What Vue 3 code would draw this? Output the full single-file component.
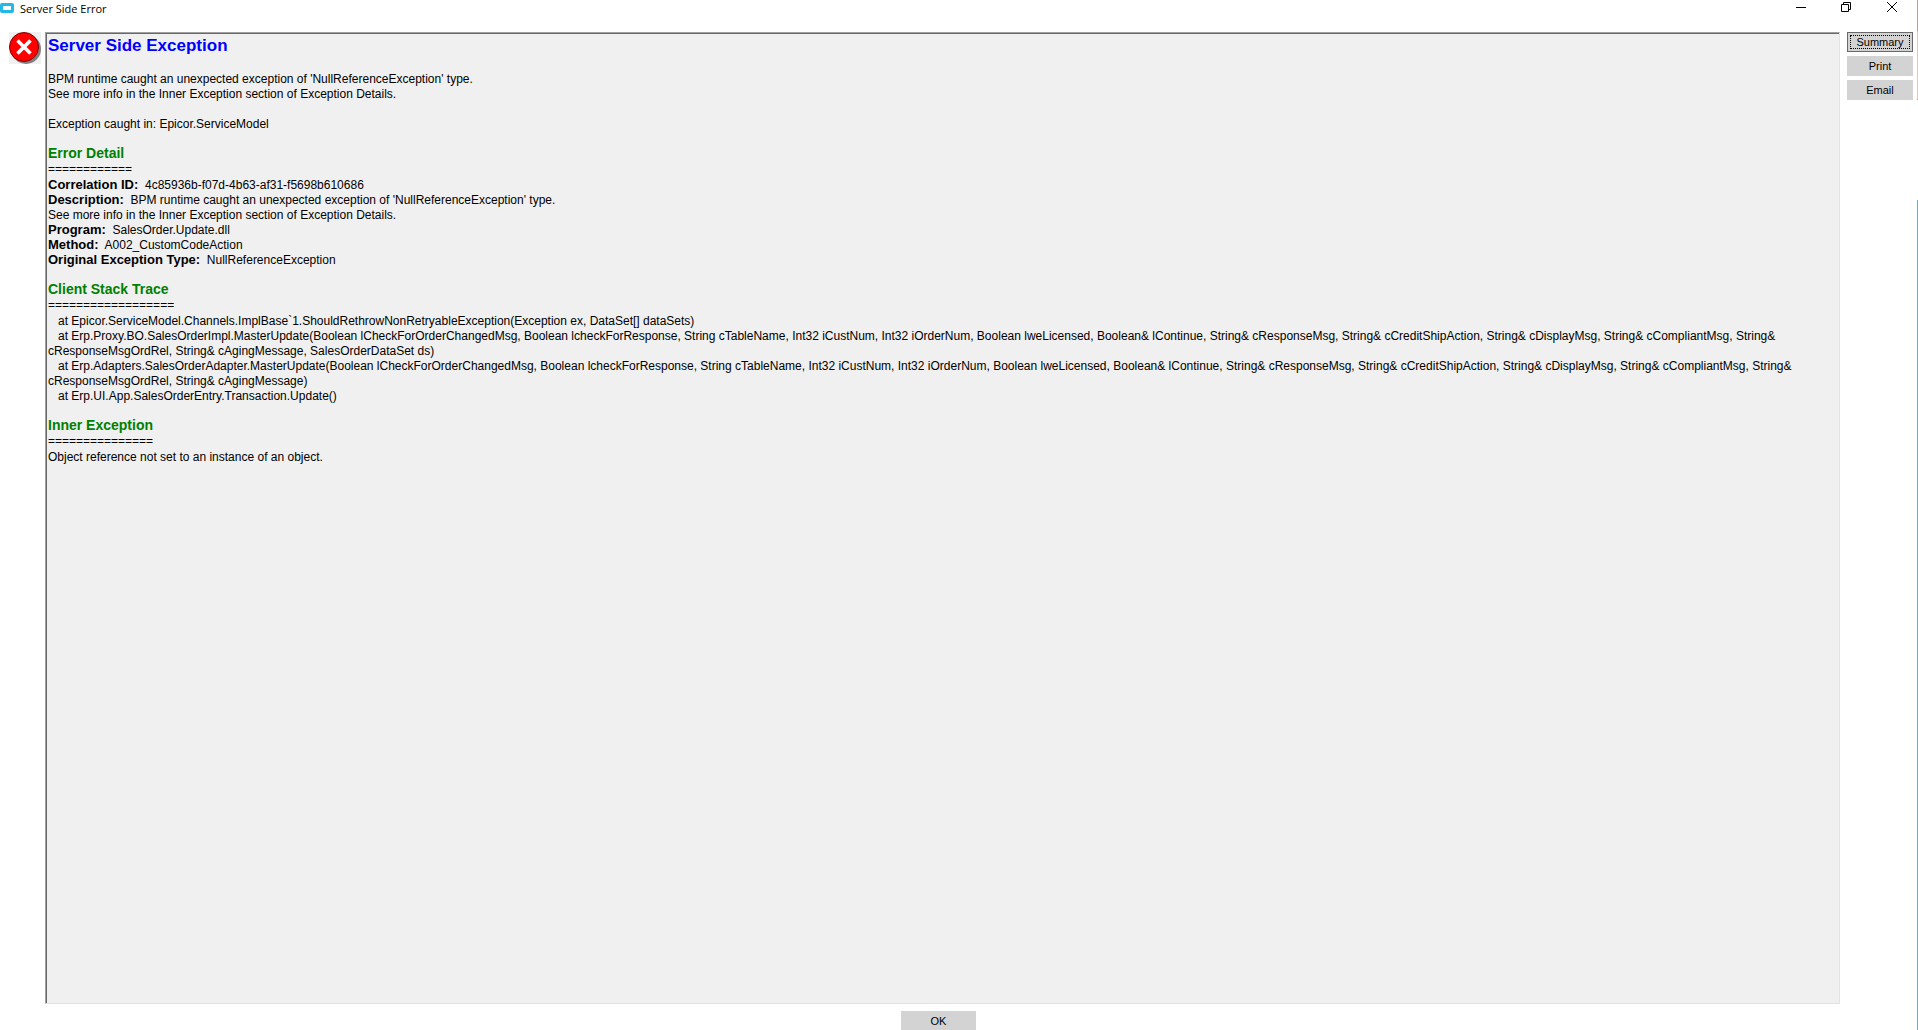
<script setup>
const rule = (n) => '='.repeat(n)

const message =
  "BPM runtime caught an unexpected exception of 'NullReferenceException' type.\nSee more info in the Inner Exception section of Exception Details."

const details = [
  { label: 'Correlation ID:', value: '4c85936b-f07d-4b63-af31-f5698b610686' },
  { label: 'Description:', value: message },
  { label: 'Program:', value: 'SalesOrder.Update.dll' },
  { label: 'Method:', value: 'A002_CustomCodeAction' },
  { label: 'Original Exception Type:', value: 'NullReferenceException' }
]

const args =
  'Boolean lCheckForOrderChangedMsg, Boolean lcheckForResponse, String cTableName, Int32 iCustNum, Int32 iOrderNum, Boolean lweLicensed, Boolean& lContinue, String& cResponseMsg, String& cCreditShipAction, String& cDisplayMsg, String& cCompliantMsg, String& cResponseMsgOrdRel, String& cAgingMessage'

const stack = [
  'Epicor.ServiceModel.Channels.ImplBase`1.ShouldRethrowNonRetryableException(Exception ex, DataSet[] dataSets)',
  `Erp.Proxy.BO.SalesOrderImpl.MasterUpdate(${args}, SalesOrderDataSet ds)`,
  `Erp.Adapters.SalesOrderAdapter.MasterUpdate(${args})`,
  'Erp.UI.App.SalesOrderEntry.Transaction.Update()'
]
</script>

<template>
  <div class="window">
    <header class="titlebar">
      <svg class="app-icon" width="14" height="10" viewBox="0 0 14 10" aria-hidden="true">
        <rect width="14" height="10" rx="2" fill="#22b8ea" />
        <rect x="3" y="3" width="8" height="4" fill="#fff" />
      </svg>
      <span class="caption">Server Side Error</span>
      <button class="control" aria-label="Minimize">
        <svg width="12" height="12" viewBox="0 0 12 12"><path d="M2 6.5h10" stroke="#000" fill="none" /></svg>
      </button>
      <button class="control" aria-label="Restore">
        <svg width="12" height="12" viewBox="0 0 12 12"><path d="M1.500 3.500h7v7h-7zM3.500 3.500v-2h7v7h-2" stroke="#000" fill="none" /></svg>
      </button>
      <button class="control" aria-label="Close">
        <svg width="12" height="12" viewBox="0 0 12 12"><path d="M1 1l10 10M11 1L1 11" stroke="#000" fill="none" /></svg>
      </button>
    </header>

    <main class="body">
      <svg class="error-icon" width="32" height="32" viewBox="0 0 32 32" role="img" aria-label="Error">
        <rect width="32" height="32" fill="#f0f0f0" />
        <circle cx="17" cy="17" r="15" fill="#808080" />
        <circle cx="15" cy="15" r="14.500" fill="#f00" stroke="#800000" />
        <path d="M8.500 8.500l13 13M21.500 8.500l-13 13" stroke="#fff" stroke-width="3.600" />
      </svg>

      <article class="report">
        <h1>Server Side Exception</h1>
        <p>{{ message }}</p>
        <p class="source">Exception caught in: Epicor.ServiceModel</p>

        <section>
          <h2>Error Detail</h2>
          <div class="rule">{{ rule(12) }}</div>
          <p v-for="d in details" :key="d.label"><b>{{ d.label }}</b>{{ '  ' + d.value }}</p>
        </section>

        <section>
          <h2>Client Stack Trace</h2>
          <div class="rule">{{ rule(18) }}</div>
          <p v-for="s in stack" :key="s">{{ '   at ' + s }}</p>
        </section>

        <section>
          <h2>Inner Exception</h2>
          <div class="rule">{{ rule(15) }}</div>
          <p>Object reference not set to an instance of an object.</p>
        </section>
      </article>

      <nav class="actions">
        <button class="btn focused">Summary</button>
        <button class="btn">Print</button>
        <button class="btn">Email</button>
      </nav>
    </main>

    <footer class="footer">
      <button class="btn ok">OK</button>
    </footer>
    <div class="edge"></div>
  </div>
</template>

<style>
body {
  margin: 0;
  overflow: hidden;
}
</style>

<style scoped>
.window {
  position: relative;
  display: flex;
  flex-direction: column;
  height: 100vh;
  background: #fff;
  color: #000;
  font: 12px/15px "Liberation Sans", Arial, sans-serif;
}
.titlebar {
  display: flex;
  flex: none;
  align-items: flex-start;
  height: 32px;
}
.app-icon {
  margin: 3px 6px 0 0;
}
.caption {
  flex: 1;
  font: 11px/17px "Open Sans", "Noto Sans", sans-serif;
}
.control {
  display: flex;
  justify-content: center;
  width: 46px;
  margin: 0;
  padding: 1px 0 0;
  border: 0;
  background: none;
}
.control:last-child {
  margin-right: 3px;
}
.body {
  display: flex;
  flex: 1;
  min-height: 0;
  padding: 0 5px 0 9px;
}
.error-icon {
  flex: none;
  margin-right: 4px;
}
.report {
  flex: 1;
  min-width: 0;
  border: 1px solid;
  border-color: #a0a0a0 #e3e3e3 #e3e3e3 #a0a0a0;
  box-shadow: inset 1px 1px #696969;
  padding: 2px 12px 0 2px;
  background: #f0f0f0;
  white-space: pre-wrap;
}
.report p,
h1,
h2 {
  margin: 0;
}
h1 {
  margin-bottom: 15px;
  color: #00f;
  font-size: 17px;
  line-height: 22px;
}
.report .source {
  margin-top: 15px;
}
section {
  margin-top: 14px;
}
h2 {
  margin-bottom: 2px;
  color: #008000;
  font-size: 14px;
  line-height: 14px;
}
.rule {
  margin-bottom: 1px;
}
b {
  font-size: 13px;
  line-height: 14px;
}
.actions {
  display: flex;
  flex: none;
  flex-direction: column;
  gap: 4px;
  width: 66px;
  margin-left: 7px;
}
.btn {
  height: 20px;
  padding: 0;
  border: 0;
  background: #d3d3d3;
  color: #000;
  font: 11px/20px "Liberation Sans", Arial, sans-serif;
}
.focused {
  border: 1px solid #696969;
  line-height: 18px;
  outline: 1px dotted #000;
  outline-offset: -4px;
}
.footer {
  display: flex;
  flex: none;
  justify-content: center;
  height: 19px;
  padding: 7px 41px 0 0;
  overflow: hidden;
}
.ok {
  flex: none;
  width: 75px;
}
.edge {
  position: absolute;
  top: 0;
  right: 0;
  bottom: 0;
  width: 1px;
  background: linear-gradient(#c49a94 0 31px, #e6c4c0 31px 99px, #c49a94 99px 100px, #fff 100px 200px, #4fb3dc 200px);
}
</style>
